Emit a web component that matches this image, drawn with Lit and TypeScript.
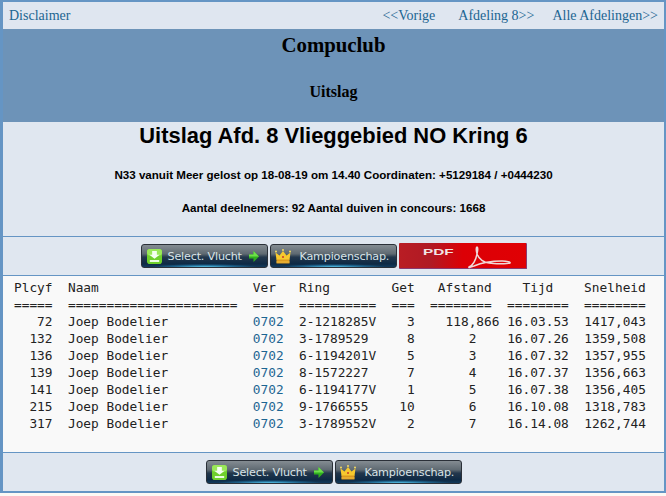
import { LitElement, html, css, svg } from "lit";
import { customElement } from "lit/decorators.js";

const rows = [
  ["72", "2-1218285V", "3", "118,866", "16.03.53", "1417,043"],
  ["132", "3-1789529", "8", "2", "16.07.26", "1359,508"],
  ["136", "6-1194201V", "5", "3", "16.07.32", "1357,955"],
  ["139", "8-1572227", "7", "4", "16.07.37", "1356,663"],
  ["141", "6-1194177V", "1", "5", "16.07.38", "1356,405"],
  ["215", "9-1766555", "10", "6", "16.10.08", "1318,783"],
  ["317", "3-1789552V", "2", "7", "16.14.08", "1262,744"],
];

const greenIcon = svg`<svg class="ic" width="15" height="15" viewBox="1 1 16 16">
  <rect x="1" y="1" width="16" height="16" rx="3" fill="#6fd02c"/>
  <rect x="1" y="1" width="16" height="7" rx="3" fill="#9be85a"/>
  <path d="M6.5 3h5v4h3L9 11.5 3.5 7h3z" fill="#f4fff0"/>
  <rect x="4" y="12.8" width="10" height="2" fill="#f4fff0"/>
</svg>`;
const arrow = svg`<svg class="ar" width="10" height="11" viewBox="0 0 10 11">
  <path d="M0 3.500h4.500V0L10 5.500 4.500 11V7.500H0z" fill="#2fb01e"/>
  <path d="M0 3.500h4.500V0L10 5.500H0z" fill="#6ee04a"/>
</svg>`;
const crown = svg`<svg class="ic crown" width="16" height="15" viewBox="0 0 16 15">
  <path d="M.5 3.500l4 3L8 2l3.500 4.500 4-3L14.500 11h-13z" fill="#f7c92e"/>
  <rect x="1.500" y="10.500" width="13" height="4" fill="#dc9a1e"/>
  <rect x="1.500" y="12.500" width="13" height="1" fill="#f2c040"/>
  <circle cx="1" cy="2.500" r="1" fill="#f7dc62"/><circle cx="8" cy="1" r="1" fill="#f7dc62"/><circle cx="15" cy="2.500" r="1" fill="#f7dc62"/>
  <circle cx="8" cy="8" r="1" fill="#c8382a"/>
</svg>`;

@customElement("app-root")
export class AppRoot extends LitElement {
  static styles = css`
    :host { display: block; width: 666px; height: 496px; background: #fdf9f4; overflow: hidden; }
    .frame {
      box-sizing: border-box; width: 666px; height: 493px;
      border: solid #6595c4; border-width: 2px 2px 2px 3px;
      display: flex; flex-direction: column;
      font-family: "Liberation Serif", serif;
    }
    .nav {
      height: 27px; flex: none; background: #dfe6f0; box-sizing: border-box;
      display: flex; align-items: center; padding: 0 6px 0 6px;
      font-size: 14px; color: #1c6592;
    }
    .nav .l { margin-right: auto; }
    .nav .m { margin-left: 23px; }
    .nav .e { margin-left: 18px; }
    .head {
      height: 93px; flex: none; background: #6d93b8; color: #000;
      display: flex; flex-direction: column; align-items: center; box-sizing: border-box;
      padding-top: 4px;
    }
    .head .a { font-size: 20.800px; font-weight: 700; line-height: 23px; }
    .head .b { font-size: 16px; font-weight: 700; line-height: 18px; margin-top: 27px; }
    .info {
      height: 115px; flex: none; background: #e0e7f0; box-sizing: border-box;
      display: flex; flex-direction: column; align-items: center;
      font-family: "Liberation Sans", sans-serif; color: #000; font-weight: 700;
      padding-top: 2px; border-bottom: 1px solid #6595c4;
    }
    .info .t { font-size: 21.900px; line-height: 23px; }
    .info .s { font-size: 11.600px; line-height: 14px; margin-top: 21px; }
    .info .s2 { margin-top: 19px; }
    .bar {
      flex: none; background: #e0e7f0; box-sizing: border-box;
      display: flex; justify-content: center; align-items: center; gap: 2px;
    }
    .bar.top { height: 39px; border-bottom: 1px solid #6595c4; }
    .bar.bot { flex: 1; border-top: 1px solid #6595c4; }
    .btn {
      box-sizing: border-box; width: 127px; height: 24px; border-radius: 3px;
      border: 1px solid #2a3038; display: flex; align-items: center; position: relative;
      background:
        radial-gradient(ellipse 42% 14% at 50% 100%, #58c8ee 0%, rgba(40, 140, 190, 0.5) 60%, transparent 100%),
        linear-gradient(#848c92 0%, #5f6a72 40%, #23374c 55%, #0e2a45 85%, #123a5c 100%);
      color: #d9e4e8; font-family: "DejaVu Sans", sans-serif; font-size: 11.200px; letter-spacing: -0.200px;
      padding-left: 5px; white-space: nowrap;
    }
    .ic { flex: none; margin-right: 6px; }
    .crown { margin: 0 9px 0 -1px; }
    .ar { flex: none; margin-left: 7px; }
    .pdf {
      box-sizing: border-box; width: 128px; height: 26px; position: relative;
      background: linear-gradient(90deg, #b91d24 0%, #b01a24 25%, #dc0006 50%, #e00004 100%);
      border: 1px solid #8a3a70; border-width: 0 1px 1px 0; border-radius: 1px;
      display: flex; align-items: flex-start; color: #f2e6e6;
      font-family: "Liberation Sans", sans-serif; font-weight: 700; font-size: 9px;
    }
    .pdf .w { transform: scaleX(1.700); transform-origin: left; margin: 4px 0 0 24px; line-height: 11px; }
    .pdf svg { position: absolute; left: 68px; top: 2px; }
    pre {
      margin: 0; flex: none; height: 176px; box-sizing: border-box; background: #f9f9f9;
      padding: 3px 0 0 11px; font-family: "DejaVu Sans Mono", monospace; font-size: 12.800px; line-height: 17px; color: #222;
    }
    pre .v { color: #1c6592; }
  `;

  private row(r: string[]) {
    const afst = r[3].length > 1 ? `    ${r[3]} ` : `       ${r[3]}    `;
    return html`${r[0].padStart(5)}  Joep Bodelier           <span class="v">0702</span>  ${r[1].padEnd(10)}  ${r[2].padStart(3)}${afst}${r[4]}  ${r[5]}\n`;
  }

  private selectBtn() {
    return html`<div class="btn">${greenIcon}<span>Select. Vlucht</span>${arrow}</div>`;
  }
  private champBtn() {
    return html`<div class="btn">${crown}<span>Kampioenschap.</span></div>`;
  }

  render() {
    const head = "Plcyf  Naam                    Ver   Ring        Get   Afstand    Tijd    Snelheid\n";
    const sep = "=====  ======================  ====  ==========  ===  ========  ========  ========\n";
    return html`<div class="frame">
      <div class="nav">
        <span class="l">Disclaimer</span>
        <span>&lt;&lt;Vorige</span>
        <span class="m">Afdeling 8&gt;&gt;</span>
        <span class="e">Alle Afdelingen&gt;&gt;</span>
      </div>
      <div class="head"><div class="a">Compuclub</div><div class="b">Uitslag</div></div>
      <div class="info">
        <div class="t">Uitslag Afd. 8 Vlieggebied NO Kring 6</div>
        <div class="s">N33 vanuit Meer gelost op 18-08-19 om 14.40 Coordinaten: +5129184 / +0444230</div>
        <div class="s s2">Aantal deelnemers: 92 Aantal duiven in concours: 1668</div>
      </div>
      <div class="bar top">
        ${this.selectBtn()}${this.champBtn()}
        <div class="pdf"><span class="w">PDF</span>
          <svg width="46" height="24" viewBox="0 0 46 24" fill="none" stroke="#f0d8d8" stroke-width="1.500">
            <path d="M2 22c4-2 7-8 8-13 1-4 1-7 0-7s-1 3 0 7c2 5 7 9 12 9 5 1 19 1 21 0 1-1-3-2-8-2-9 0-21 2-28 5-3 1-6 2-5 1z"/>
          </svg>
        </div>
      </div>
      <pre>${head}${sep}${rows.map((r) => this.row(r))}</pre>
      <div class="bar bot">${this.selectBtn()}${this.champBtn()}</div>
    </div>`;
  }
}
